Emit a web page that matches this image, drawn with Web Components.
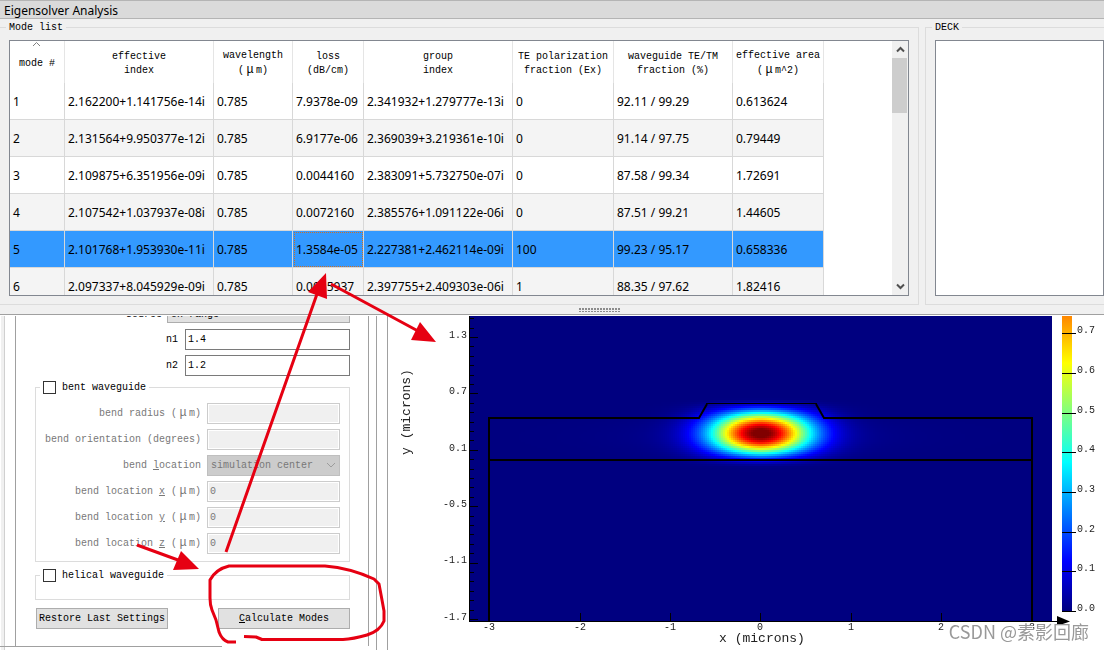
<!DOCTYPE html>
<html lang="en">
<head>
<meta charset="utf-8">
<title>Eigensolver Analysis</title>
<style>
  html, body { margin: 0; height: 100%; }
  body { overflow: hidden; background: #fff; color: #000; }
</style>
</head>
<body>
<eigensolver-app></eigensolver-app>
<script>
const MONO = '"Liberation Mono", monospace';
const UI = '"Noto Sans", "Open Sans", sans-serif';

function define(name, html, setup) {
  const template = document.createElement('template');
  template.innerHTML = html;
  customElements.define(name, class extends HTMLElement {
    constructor() {
      super();
      this.attachShadow({ mode: 'open' }).append(template.content.cloneNode(true));
    }
    connectedCallback() {
      if (setup && !this.ready) { this.ready = true; setup(this, this.shadowRoot); }
    }
  });
}

/* Title strip of the docked window */
define('dock-title', `
<style>
  :host { display: block; box-sizing: border-box; height: 19px; padding-left: 4px; background: #dadada;
    border-top: 1px solid #b4b4b4; border-bottom: 1px solid #b4b4b4; }
  h1 { margin: 0; font: 12px/19px ${UI}; }
</style>
<h1><slot></slot></h1>`);

/* Titled frame */
define('group-box', `
<style>
  :host { display: flex; min-width: 0; }
  fieldset { flex: 1; display: flex; min-width: 0; margin: 0; box-sizing: border-box; border: 1px solid #dcdcdc;
    padding: 6px 9px 8px; }
  legend { padding: 0 3px; margin-left: -3px; font: 10px/13px ${MONO}; }
  ::slotted(*) { flex: 1; min-width: 0; }
</style>
<fieldset><legend></legend><slot></slot></fieldset>`, (host, root) => {
  root.querySelector('legend').textContent = host.getAttribute('label');
});

/* Vertical scroll bar */
define('scroll-bar', `
<style>
  :host { display: flex; flex-direction: column; width: 16px; background: #f0f0f0; }
  button { all: unset; height: 17px; display: grid; place-items: center; }
  .track { flex: 1; }
  .thumb { width: 15px; height: 55px; background: #cdcdcd; }
  svg { display: block; }
</style>
<button aria-label="Scroll up"><svg width="9" height="7"><path d="M1 5.500 4.500 2 8 5.500" fill="none" stroke="#505050" stroke-width="2"/></svg></button>
<div class="track"><div class="thumb"></div></div>
<button aria-label="Scroll down"><svg width="9" height="7"><path d="M1 1.500 4.500 5 8 1.500" fill="none" stroke="#505050" stroke-width="2"/></svg></button>`);

const MU = '<span class="mu">μ</span>';
const HEADS = ['mode #', 'effective<br>index', `wavelength<br>(${MU}m)`, 'loss<br>(dB/cm)', 'group<br>index',
  'TE polarization<br>fraction (Ex)', 'waveguide TE/TM<br>fraction (%)', `effective area<br>(${MU}m^2)`];
const WIDTHS = [55, 149, 79, 71, 149, 101, 119, 91];
const MODES = [
  ['1', '2.162200+1.141756e-14i', '0.785', '7.9378e-09', '2.341932+1.279777e-13i', '0', '92.11 / 99.29', '0.613624'],
  ['2', '2.131564+9.950377e-12i', '0.785', '6.9177e-06', '2.369039+3.219361e-10i', '0', '91.14 / 97.75', '0.79449'],
  ['3', '2.109875+6.351956e-09i', '0.785', '0.0044160', '2.383091+5.732750e-07i', '0', '87.58 / 99.34', '1.72691'],
  ['4', '2.107542+1.037937e-08i', '0.785', '0.0072160', '2.385576+1.091122e-06i', '0', '87.51 / 99.21', '1.44605'],
  ['5', '2.101768+1.953930e-11i', '0.785', '1.3584e-05', '2.227381+2.462114e-09i', '100', '99.23 / 95.17', '0.658336'],
  ['6', '2.097337+8.045929e-09i', '0.785', '0.0055937', '2.397755+2.409303e-06i', '1', '88.35 / 97.62', '1.82416']
];

/* Table of solved modes */
define('mode-table', `
<style>
  :host { display: flex; box-sizing: border-box; border: 1px solid #828790; background: #fff; }
  .view { flex: 1; min-width: 0; overflow: hidden; contain: size; }
  table { border-collapse: separate; border-spacing: 0; table-layout: fixed; width: 814px; }
  th { box-sizing: border-box; height: 42px; padding: 3px 0 0; border-right: 1px solid #e5e5e5; font: 10px/14px ${MONO};
    position: relative; white-space: nowrap; }
  th svg { position: absolute; left: 22px; top: 0; }
  td { box-sizing: border-box; height: 37px; padding: 2px 0 0 3px; border-right: 1px solid #d8d8d8;
    border-bottom: 1px solid #d8d8d8; font: 12px/16px ${UI}; white-space: nowrap; overflow: hidden; }
  tr:nth-child(even) td { background: #f4f4f4; }
  tr.selected td { background: #3399ff; }
  td.focus { outline: 1px dotted #c8702a; outline-offset: -2px; }
  .mu { display: inline-block; width: 12px; text-align: center; font-size: 12px; }
</style>
<div class="view"><table><colgroup></colgroup><thead><tr></tr></thead><tbody></tbody></table></div>
<scroll-bar></scroll-bar>`, (host, root) => {
  root.querySelector('colgroup').innerHTML = WIDTHS.map(w => `<col style="width:${w}px">`).join('');
  root.querySelector('thead tr').innerHTML = HEADS.map((h, i) => `<th scope="col">${h}${i ? '' :
    '<svg width="9" height="6"><path d="M1 5 4.500 1.500 8 5" fill="none" stroke="#808080"/></svg>'}</th>`).join('');
  root.querySelector('tbody').innerHTML = MODES.map((row, r) => `<tr${r === 4 ? ' class="selected"' : ''}>${
    row.map((v, c) => `<td${r === 4 && c === 3 ? ' class="focus"' : ''}>${v}</td>`).join('')}</tr>`).join('');
});

define('deck-list', `
<style>:host { display: block; box-sizing: border-box; background: #fff; border: 1px solid #828790; }</style>`);

/* Handle between the upper and lower parts */
define('split-handle', `
<style>
  :host { display: flex; justify-content: center; align-items: center; height: 9px; padding-left: 96px;
    border-bottom: 1px solid #a0a0a0; background: #f0f0f0; }
  i { width: 42px; height: 4px;
    background: repeating-linear-gradient(90deg, #8c8c8c 0 2px, transparent 2px 3px);
    -webkit-mask: linear-gradient(#000 0 2px, transparent 2px 3px, #000 3px); }
</style><i></i>`);

/* Solver settings form */
define('solver-settings', `
<style>
  :host { display: flex; background: #fff; font: 10px/14px ${MONO}; border-right: 1px solid #a0a0a0; box-sizing: border-box; }
  .edge { width: 5px; background: linear-gradient(90deg, #fff 1px, #f0f0f0 1px 4px, #d0d0d0 4px); }
  .body { flex: 1; display: flex; flex-direction: column; }
  .gutter { width: 10px; border-left: 1px solid #a0a0a0; }
  .scroll { flex: 1; box-sizing: border-box; margin: 0 7px 0 10px; border: solid #a0a0a0; border-width: 0 1px;
    display: flex; flex-direction: column; justify-content: flex-end; overflow: hidden; contain: size;
    padding: 0 18px 17px 19px; }
  .foot { width: 222px; margin-left: -5px; border-bottom: 1px solid #a0a0a0; }
  .bottom { height: 3px; }
  .row { display: grid; grid-template-columns: 1fr 165px; column-gap: 7px; align-items: center; margin-bottom: 5px; flex: none; }
  .row.src { grid-template-columns: 1fr 183px; column-gap: 5px; margin-bottom: 6px; }
  .row.src > * { padding-top: 4px; }
  label { text-align: right; white-space: nowrap; }
  input[type=text], select { box-sizing: border-box; width: 100%; height: 21px; margin: 0; padding: 0 2px; border-radius: 0;
    font: inherit; color: #000; background: #fff; border: 1px solid #7a7a7a; }
  select { appearance: none; background: #e1e1e1; border-color: #adadad; padding: 0 3px; }
  .pick { position: relative; display: grid; }
  .pick svg { position: absolute; right: 4px; top: 7px; }
  fieldset { margin: 0; padding: 0; border: 1px solid #dcdcdc; min-width: 0; flex: none; box-sizing: border-box; }
  legend { display: flex; align-items: center; gap: 6px; margin-left: 4px; padding: 0 3px; height: 13px; }
  legend input { appearance: none; box-sizing: border-box; width: 13px; height: 13px; margin: 0; border: 1px solid #333; background: #fff; }
  .off { padding: 9px 9px 0 0; color: #787878; }
  .off .row { grid-template-columns: 1fr 133px; column-gap: 6px; }
  .off input[type=text] { color: #787878; background: #f0f0f0; border-color: #ccc; box-shadow: inset 0 0 0 1px #fff; }
  .off select { color: #787878; background: #ccc; border-color: #bfbfbf; opacity: 1; }
  .mu { display: inline-block; width: 12px; text-align: center; font-size: 12px; }
  .bent { height: 181px; }
  .helical { height: 31px; margin-top: 7px; }
  .actions { display: flex; justify-content: space-between; margin: 8px 0 0 1px; flex: none; }
  button { width: 132px; height: 21px; padding: 0; box-sizing: border-box; font: inherit; color: #000; background: #e1e1e1;
    border: 1px solid #adadad; border-radius: 0; }
</style>
<div class="edge"></div>
<div class="body">
  <form class="scroll">
    <div class="row src"><label for="src">source</label>
      <select id="src"><option>on range</option></select></div>
    <div class="row"><label for="n1">n1</label><input type="text" id="n1" value="1.4"></div>
    <div class="row"><label for="n2">n2</label><input type="text" id="n2" value="1.2"></div>
    <fieldset class="bent">
      <legend><input type="checkbox" id="bent"><label for="bent">bent waveguide</label></legend>
      <div class="off">
        <div class="row"><label for="rad">bend radius (${MU}m)</label><input type="text" id="rad" disabled></div>
        <div class="row"><label for="ori">bend orientation (degrees)</label><input type="text" id="ori" disabled></div>
        <div class="row"><label for="loc">bend <u>l</u>ocation</label><div class="pick">
          <select id="loc" disabled><option>simulation center</option></select>
          <svg width="10" height="7"><path d="M1 1 5 5 9 1" fill="none" stroke="#9c9c9c"/></svg></div></div>
        <div class="row"><label for="bx">bend location <u>x</u> (${MU}m)</label><input type="text" id="bx" value="0" disabled></div>
        <div class="row"><label for="by">bend location <u>y</u> (${MU}m)</label><input type="text" id="by" value="0" disabled></div>
        <div class="row"><label for="bz">bend location <u>z</u> (${MU}m)</label><input type="text" id="bz" value="0" disabled></div>
      </div>
    </fieldset>
    <fieldset class="helical">
      <legend><input type="checkbox" id="hel"><label for="hel">helical waveguide</label></legend>
    </fieldset>
    <div class="actions"><button type="button">Restore Last Settings</button><button type="button"><u>C</u>alculate Modes</button></div>
  </form>
  <div class="foot"></div>
  <div class="bottom"></div>
</div>
<div class="gutter"></div>`);

/* Mode intensity plot with axes, structure outline and colour scale */
define('mode-plot', `
<style>
  :host { display: grid; justify-content: start; align-content: start; background: #fff; overflow: hidden; contain: size; }
  canvas, svg { grid-area: 1 / 1; display: block; }
  canvas { margin-left: 81px; }
  text { font: 10px ${MONO}; fill: #222; }
  .axis { font-size: 13px; }
</style>
<canvas width="583" height="305"></canvas>
<svg width="716" height="334" viewBox="388 316 716 334">
  <defs><linearGradient id="jet" x1="0" y1="1" x2="0" y2="0">
    <stop offset="0" stop-color="#000080"/><stop offset=".168" stop-color="#0000ff"/>
    <stop offset=".505" stop-color="#00ffff"/><stop offset=".841" stop-color="#ffff00"/>
    <stop offset="1" stop-color="#ff8700"/></linearGradient></defs>
  <g fill="none" stroke="#000">
    <path id="ticks" shape-rendering="crispEdges"/>
    <path d="M489 621V418H699L707 404M816 404L824 418H1032V621M489 460H1032" stroke-width="2"/>
    <path d="M706 403.500H817" shape-rendering="crispEdges"/>
  </g>
  <path d="M1057 616 1070 621.500 1057 626z"/>
  <rect x="1062" y="316" width="10" height="295" fill="url(#jet)"/>
  <g id="labels"></g>
  <path id="bar" stroke="#000" shape-rendering="crispEdges"/>
  <text class="axis" x="762" y="642" text-anchor="middle">x (microns)</text>
  <text class="axis" transform="translate(410 412) rotate(-90)" text-anchor="middle">y (microns)</text>
</svg>`, (host, root) => {
  const canvas = root.querySelector('canvas'), ctx = canvas.getContext('2d');
  const W = canvas.width, H = canvas.height, img = ctx.createImageData(W, H);
  const clamp = v => Math.max(0, Math.min(1, v));
  for (let y = 0; y < H; y++) for (let x = 0; x < W; x++) {
    const dx = Math.floor(x / 2) * 2 - 291, dy = Math.floor(y / 2) * 2 - 116;
    const core = Math.abs(dy) < 35 ? Math.cos(Math.PI / 2 * dy / 35) ** 2 : 0;
    const f = Math.min(1, 0.96 * core * Math.exp(-dx * dx / 2400)
      + 0.08 * Math.exp(-Math.abs(dx) / 55) * Math.exp(-(((dy - 4) / 17) ** 2)));
    const i = (y * W + x) * 4;
    img.data[i] = 255 * clamp(1.5 - Math.abs(4 * f - 3));
    img.data[i + 1] = 255 * clamp(1.5 - Math.abs(4 * f - 2));
    img.data[i + 2] = 255 * clamp(1.5 - Math.abs(4 * f - 1));
    img.data[i + 3] = 255;
  }
  ctx.putImageData(img, 0, 0);

  let ticks = 'M469.500 316V621.500H1057', labels = '', bar = '';
  for (let i = 0; i < 33; i++) {
    const y = Math.round(619 - i * 9.4) + 0.5;
    if (y > 316) ticks += `M469 ${y}h${i % 6 ? 5 : 9}`;
  }
  ['1.3', '0.7', '0.1', '-0.5', '-1.1', '-1.7'].forEach((t, i) => {
    labels += `<text x="467" y="${338 + Math.round(i * 56.3)}" text-anchor="end">${t}</text>`;
  });
  [489, 580, 670, 760, 851, 941, 1032].forEach((x, i) => {
    ticks += `M${x}.5 622v-9`;
    labels += `<text x="${x}" y="630" text-anchor="middle">${i - 3}</text>`;
  });
  for (let v = 0; v < 8; v++) {
    const y = Math.round(611 - v * 39.7);
    bar += `M1062 ${y}.5h14`;
    labels += `<text x="1077" y="${y}">${(v / 10).toFixed(1)}</text>`;
  }
  root.querySelector('#ticks').setAttribute('d', ticks);
  root.querySelector('#bar').setAttribute('d', bar);
  root.querySelector('#labels').innerHTML = labels;
});

/* Hand-drawn red marks over the window */
define('red-marks', `
<style>:host { display: block; position: absolute; left: 0; top: 0; pointer-events: none; } svg { display: block; }</style>
<svg width="1104" height="650" fill="none" stroke="#e60012" stroke-width="3" aria-hidden="true">
  <path d="M137 545 178 560M226 552 317 294M331 284 418 331"/>
  <path d="M199 569 181 551 173 570zM326 273 308 292 327 299zM436 342 420 322 411 340z" fill="#e60012" stroke="none"/>
  <path d="M236 642H228Q222 640 219 632L216 620 212 610Q210 605 210 598V580Q216 569 229 566H325Q350 568 374 579L379 584 382 600 384 611V621Q380 631 367 635 353 639 343 639.500H262L256 637 244 636.500" stroke-linejoin="round"/>
</svg>`);

define('water-mark', `
<style>:host { display: block; position: absolute; right: 15px; bottom: 7px; white-space: nowrap; pointer-events: none;
  font: 18px/24px "Noto Sans CJK SC", sans-serif; color: #999; text-shadow: 1px 1px 0 #fff; }</style><slot></slot>`);

define('eigensolver-app', `
<style>
  :host { display: flex; flex-direction: column; height: 100vh; position: relative; overflow: hidden; }
  .top { flex: 0 0 286px; display: grid; grid-template-columns: minmax(0, 1fr) 179px; column-gap: 6px; background: #f0f0f0;
    padding-top: 2px; box-sizing: border-box; }
  .modes { margin-left: -1px; }
  .deck { margin-right: -10px; }
  .bottom { flex: 1; display: grid; grid-template-columns: 388px minmax(0, 1fr); padding-top: 1px; min-height: 0; }
</style>
<dock-title>Eigensolver Analysis</dock-title>
<section class="top">
  <group-box class="modes" label="Mode list"><mode-table></mode-table></group-box>
  <group-box class="deck" label="DECK"><deck-list></deck-list></group-box>
</section>
<split-handle></split-handle>
<section class="bottom">
  <solver-settings></solver-settings>
  <mode-plot></mode-plot>
</section>
<red-marks></red-marks>
<water-mark>CSDN @素影回廊</water-mark>`);
</script>
</body>
</html>
